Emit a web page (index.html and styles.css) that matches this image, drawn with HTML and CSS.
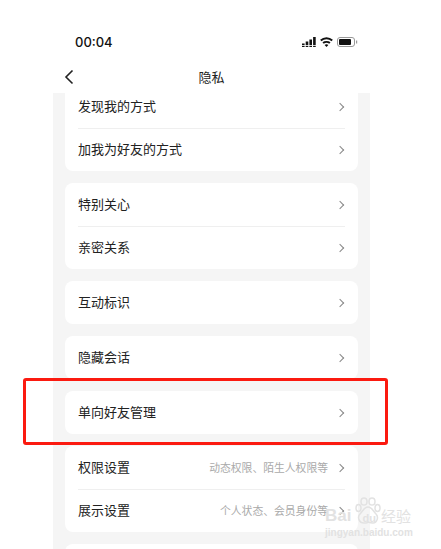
FILE: index.html
```html
<!DOCTYPE html>
<html lang="zh-CN">
<head>
    <meta charset="UTF-8">
    <meta name="viewport" content="width=device-width, initial-scale=1.0">
    <title>隐私</title>
    <link rel="stylesheet" href="styles.css">
</head>
<body>
    <div class="phone">
        <div class="status-bar">
            <span class="time">00:04</span>
            <div class="status-icons">
                <svg width="14" height="10" viewBox="0 0 14 10" fill="#111">
                    <rect x="0" y="6.500" width="2.600" height="1.500"/>
                    <rect x="0" y="8.800" width="2.600" height="1.200"/>
                    <rect x="3.700" y="4.500" width="2.600" height="3.500"/>
                    <rect x="3.700" y="8.800" width="2.600" height="1.200"/>
                    <rect x="7.400" y="2.500" width="2.600" height="5.500"/>
                    <rect x="7.400" y="8.800" width="2.600" height="1.200"/>
                    <rect x="11.100" y="0" width="2.600" height="8"/>
                    <rect x="11.100" y="8.800" width="2.600" height="1.200"/>
                </svg>
                <svg width="13" height="10" viewBox="0 0 13 10" fill="none" stroke="#111" stroke-width="2">
                    <path d="M.8 3.600C4 .6 9 .6 12.200 3.600"/>
                    <path d="M3.100 6.100C5 4.500 8 4.500 9.900 6.100"/>
                    <path d="M6.500 10L4.600 7.900Q6.500 6.700 8.400 7.900Z" fill="#111" stroke="none"/>
                </svg>
                <svg width="21" height="10" viewBox="0 0 21 10">
                    <rect x=".5" y=".5" width="17" height="9" rx="2.500" fill="none" stroke="#999"/>
                    <rect x="2" y="2" width="12" height="6" rx="1" fill="#111"/>
                    <rect x="19" y="3.500" width="1.200" height="3" fill="#999"/>
                </svg>
            </div>
        </div>

        <div class="nav-bar">
            <svg class="back" width="10" height="16" viewBox="0 0 10 16" fill="none" stroke="#222" stroke-width="1.600">
                <path d="M8.500 1.500L2 8l6.500 6.500"/>
            </svg>
            <span class="nav-title">隐私</span>
        </div>

        <div class="list">
            <div class="cards">
                <div class="card">
                    <div class="row"><span class="label">发现我的方式</span><span class="chevron"></span></div>
                    <div class="row"><span class="label">加我为好友的方式</span><span class="chevron"></span></div>
                </div>
                <div class="card">
                    <div class="row"><span class="label">特别关心</span><span class="chevron"></span></div>
                    <div class="row"><span class="label">亲密关系</span><span class="chevron"></span></div>
                </div>
                <div class="card">
                    <div class="row"><span class="label">互动标识</span><span class="chevron"></span></div>
                </div>
                <div class="card">
                    <div class="row"><span class="label">隐藏会话</span><span class="chevron"></span></div>
                </div>
                <div class="card">
                    <div class="row"><span class="label">单向好友管理</span><span class="chevron"></span></div>
                </div>
                <div class="card">
                    <div class="row"><span class="label">权限设置</span><span class="hint">动态权限、陌生人权限等</span><span class="chevron"></span></div>
                    <div class="row"><span class="label">展示设置</span><span class="hint">个人状态、会员身份等</span><span class="chevron"></span></div>
                </div>
                <div class="card">
                    <div class="row"></div>
                </div>
            </div>
        </div>
    </div>

    <!-- 红色标注框 -->
    <div class="highlight"></div>

    <!-- 水印 -->
    <div class="watermark">
        <svg class="paw" width="26" height="27" viewBox="0 0 26 27" fill="none" stroke="#e2e2e2" stroke-width="1.500">
            <ellipse cx="3.500" cy="11" rx="2.500" ry="3.500"/>
            <ellipse cx="9" cy="4.500" rx="3" ry="3.600"/>
            <ellipse cx="17" cy="4.500" rx="3" ry="3.600"/>
            <ellipse cx="22.500" cy="11" rx="2.500" ry="3.500"/>
            <path d="M13 10c-4 0-5 4-8 7s-1 9 4 9 3-1 4-1 1 1 5 1 6-6 3-9-4-7-8-7z"/>
        </svg>
        <div class="wm-main"><span>Bai</span><span class="wm-du">du</span><span class="wm-cn">经验</span></div>
        <div class="wm-url">jingyan.baidu.com</div>
    </div>
</body>
</html>
```

FILE: styles.css
```css
* {
    margin: 0;
    padding: 0;
    box-sizing: border-box;
}

html, body {
    height: 100%;
    overflow: hidden;
}

body {
    background: white;
    font-family: 'Noto Sans CJK SC', 'Liberation Sans', sans-serif;
    color: #222;
    position: relative;
}

.phone {
    width: 317px;
    height: 549px;
    margin-left: 53px;
    display: flex;
    flex-direction: column;
}

.status-bar {
    height: 60px;
    padding: 23px 12px 0 22px;
    display: flex;
    justify-content: space-between;
    align-items: center;
}

.time {
    font-family: Inter, 'Liberation Sans', sans-serif;
    font-size: 13px;
    font-weight: 500;
    color: #111;
}

.status-icons {
    display: flex;
    align-items: center;
    gap: 4px;
}

.nav-bar {
    height: 33px;
    padding-left: 12px;
    position: relative;
    display: flex;
    align-items: center;
    justify-content: center;
}

.back {
    position: absolute;
    left: 11px;
    top: 9px;
}

.nav-title {
    font-size: 13px;
    color: #222;
    margin-bottom: 1px;
    margin-right: 12px;
}

.list {
    flex: 1;
    overflow: hidden;
    background: #f5f5f5;
    padding: 0 12px;
}

.cards {
    margin-top: -8px;
    display: flex;
    flex-direction: column;
    gap: 12px;
}

.card {
    background: white;
    border-radius: 8px;
    padding: 0 13px;
}

.row {
    height: 43px;
    padding-bottom: 2px;
    display: flex;
    align-items: center;
}

.row + .row {
    border-top: 1px solid #efefef;
    padding-bottom: 3px;
}

.label {
    font-size: 13px;
    color: #222;
    flex: 1;
}

.hint {
    font-size: 10.800px;
    color: #aaa;
    margin-right: 9px;
}

.chevron {
    width: 6px;
    height: 6px;
    border-top: 1px solid #888;
    border-right: 1px solid #888;
    transform: rotate(45deg);
    margin-right: 2px;
    margin-top: 2px;
}

.highlight {
    position: absolute;
    left: 23px;
    top: 378px;
    width: 365px;
    height: 67px;
    border: 3px solid #fb1a10;
    border-radius: 3px;
}

.watermark {
    position: absolute;
    left: 325px;
    top: 497px;
    width: 100px;
    height: 50px;
    color: #e2e2e2;
}

.paw {
    position: absolute;
    left: 30px;
    top: 0;
}

.wm-main {
    position: absolute;
    left: 0;
    top: 8px;
    font-family: 'Liberation Sans', sans-serif;
    font-size: 17px;
    font-weight: 700;
    white-space: nowrap;
    display: flex;
    align-items: center;
}

.wm-du {
    font-size: 11px;
    margin-left: 11px;
    margin-top: 4px;
}

.wm-cn {
    font-family: 'Noto Sans CJK SC', sans-serif;
    font-size: 15px;
    font-weight: 400;
    margin-left: 5px;
}

.wm-url {
    position: absolute;
    left: 0;
    top: 30px;
    font-family: 'Liberation Sans', sans-serif;
    font-size: 10px;
    font-weight: 700;
    white-space: nowrap;
}
```
